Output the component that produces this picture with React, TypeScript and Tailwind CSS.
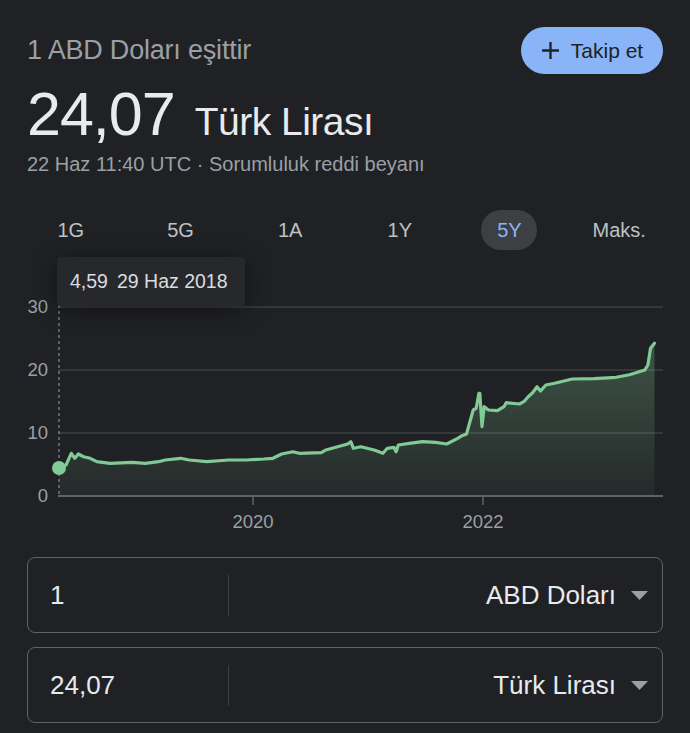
import React from "react";

// points read off the reference: [x in zoom px, y in zoom px]
const RAW: [number, number][] = [
  [132, 565], [150, 555], [162, 520], [170, 535], [178, 522], [190, 530], [205, 535],
  [220, 545], [250, 550], [300, 547], [330, 550], [360, 545], [375, 540], [410, 535],
  [430, 540], [470, 545], [520, 540], [560, 540], [600, 537], [620, 535], [640, 522],
  [665, 515], [680, 520], [730, 518], [740, 510], [790, 492], [797, 485], [803, 505],
  [820, 500], [850, 510], [870, 520], [880, 505], [895, 502], [900, 515], [905, 495],
  [930, 490], [960, 485], [990, 487], [1015, 492], [1040, 475], [1050, 467], [1060, 462],
  [1075, 390], [1082, 385], [1088, 340], [1090, 340], [1095, 440], [1100, 380], [1110, 390],
  [1130, 392], [1145, 380], [1150, 368], [1180, 372], [1190, 365], [1200, 350], [1210, 338],
  [1220, 320], [1228, 333], [1240, 315], [1260, 310], [1300, 297], [1350, 296], [1400, 292],
  [1430, 284], [1465, 270], [1472, 255], [1478, 205], [1487, 190],
];

const TOP = 255; // page y where the chart block starts
const pts = RAW.map(([zx, zy]) => [zx / 2.272, 280 + zy / 3 - TOP] as const);
pts[0] = [59, 468 - TOP];

const linePath = pts.map(([x, y], i) => `${i ? "L" : "M"}${x.toFixed(1)} ${y.toFixed(1)}`).join(" ");
const baseY = 496 - TOP;
const areaPath = `${linePath} L${pts[pts.length - 1][0].toFixed(1)} ${baseY} L59 ${baseY} Z`;

const GRID = [
  { v: "30", y: 307 },
  { v: "20", y: 370 },
  { v: "10", y: 433 },
];

const TABS = ["1G", "5G", "1A", "1Y", "5Y", "Maks."];

function Chart() {
  return (
    <div className="relative mt-[5px] h-[285px]">
      <svg width="690" height="285" viewBox="0 0 690 285" className="block">
        <defs>
          <linearGradient id="fill" x1="0" y1="0" x2="0" y2="1">
            <stop offset="0%" stopColor="#81c995" stopOpacity="0.3" />
            <stop offset="100%" stopColor="#81c995" stopOpacity="0.05" />
          </linearGradient>
        </defs>
        {GRID.map((g) => (
          <g key={g.v}>
            <line x1="58" x2="663" y1={g.y - TOP} y2={g.y - TOP} stroke="#3c4043" strokeWidth="1.5" />
            <text x="48" y={g.y - TOP + 6} textAnchor="end" fill="#9aa0a6" fontSize="18.5">
              {g.v}
            </text>
          </g>
        ))}
        <path d={areaPath} fill="url(#fill)" />
        <line x1="58" x2="663" y1={baseY} y2={baseY} stroke="#5f6368" strokeWidth="2" />
        <text x="48" y={baseY + 6} textAnchor="end" fill="#9aa0a6" fontSize="18.5">
          0
        </text>
        <line x1="253" x2="253" y1={baseY} y2={baseY + 9} stroke="#5f6368" strokeWidth="1.5" />
        <line x1="483" x2="483" y1={baseY} y2={baseY + 9} stroke="#5f6368" strokeWidth="1.5" />
        <text x="253" y={528 - TOP} textAnchor="middle" fill="#9aa0a6" fontSize="18.5">
          2020
        </text>
        <text x="483" y={528 - TOP} textAnchor="middle" fill="#9aa0a6" fontSize="18.5">
          2022
        </text>
        <line x1="59" x2="59" y1={305 - TOP} y2={baseY} stroke="#9aa0a6" strokeWidth="1" strokeDasharray="3 3" />
        <path d={linePath} fill="none" stroke="#81c995" strokeWidth="3.2" strokeLinejoin="round" strokeLinecap="round" />
        <circle cx="59" cy={468 - TOP} r="7" fill="#81c995" />
      </svg>
      <div className="absolute left-[57px] top-[2px] flex h-[49px] w-[188px] items-center gap-[9px] rounded-sm bg-[#27282b] pl-[13px] text-[19.5px] text-[#dadce0] shadow-[0_4px_24px_rgba(0,0,0,0.45)]">
        <span>4,59</span>
        <span>29 Haz 2018</span>
      </div>
    </div>
  );
}

function CurrencyBox({ value, unit }: { value: string; unit: string }) {
  return (
    <div className="flex h-[76px] items-center rounded-lg border border-[#5f6368]">
      <div className="w-[200px] pl-[22px] text-[26px] text-[#e8eaed]">{value}</div>
      <div className="h-[41px] w-px bg-[#3c4043]" />
      <div className="flex flex-1 items-center justify-end pr-[14px] text-[26px] text-[#e8eaed]">
        <span>{unit}</span>
        <svg width="17" height="9" viewBox="0 0 17 9" className="ml-[15px]">
          <path d="M0 0 L17 0 L8.5 9 Z" fill="#9aa0a6" />
        </svg>
      </div>
    </div>
  );
}

export default function App() {
  return (
    <main className="min-h-screen w-[690px] bg-[#202124] font-['Liberation_Sans',Arial,sans-serif] leading-none">
      <div className="px-[27px]">
        <div className="flex items-center justify-between pt-[27px]">
          <p className="text-[27px] tracking-[-0.2px] text-[#9aa0a6]">1 ABD Doları eşittir</p>
          <button className="flex h-[47px] w-[142px] items-center justify-center gap-[11px] rounded-full bg-[#8ab4f8] text-[21px] font-medium text-[#202124]">
            <svg width="19" height="19" viewBox="0 0 18 18">
              <path d="M9 1 V17 M1 9 H17" stroke="#202124" strokeWidth="2.2" />
            </svg>
            Takip et
          </button>
        </div>
        <div className="mt-[10px] flex h-[60px] items-baseline gap-[20px] text-[#e8eaed]">
          <span className="text-[61px] tracking-[-1px]">24,07</span>
          <span className="text-[39px] tracking-[-0.5px]">Türk Lirası</span>
        </div>
        <p className="mt-[8px] h-[24px] text-[20px] leading-[24px] text-[#9aa0a6]">
          22 Haz 11:40 UTC · Sorumluluk reddi beyanı
        </p>
      </div>

      <div className="mt-[34px] grid grid-cols-6 px-[16px]">
        {TABS.map((t) => (
          <div key={t} className="flex justify-center">
            <span
              className={
                t === "5Y"
                  ? "flex h-[40px] w-[56px] items-center justify-center rounded-full bg-[#3c4043] text-[20px] text-[#8ab4f8]"
                  : "flex h-[40px] items-center justify-center text-[20px] text-[#bdc1c6]"
              }
            >
              {t}
            </span>
          </div>
        ))}
      </div>

      <Chart />

      <div className="mt-[17px] flex flex-col gap-[14px] pl-[27px] pr-[27px]">
        <CurrencyBox value="1" unit="ABD Doları" />
        <CurrencyBox value="24,07" unit="Türk Lirası" />
      </div>
    </main>
  );
}
